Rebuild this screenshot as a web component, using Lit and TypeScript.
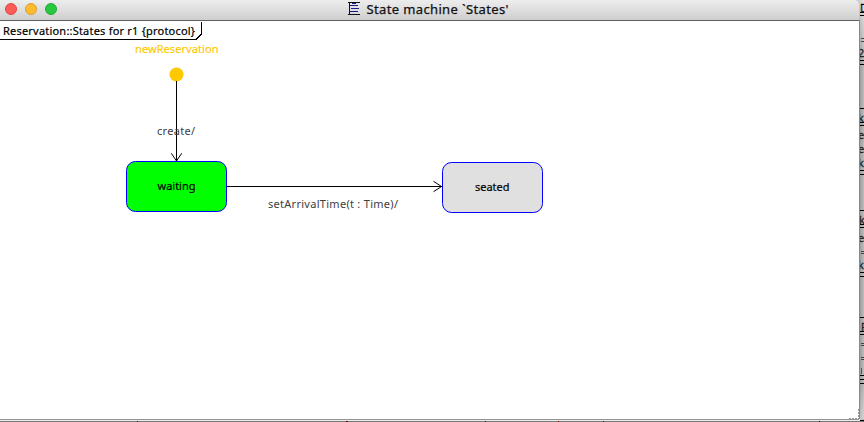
import { LitElement, html, svg, css } from "lit";
import { customElement } from "lit/decorators.js";

const RULES = [12, 15, 60, 64, 108, 122, 125, 170, 174, 210, 224, 227, 272, 276, 317, 331, 334, 375, 379, 383, 420];
const DASHES = [38, 41, 251, 253, 343, 345, 357, 359];
const GLYPHS: [string, number, number][] = [
  ["D", 860, 12], ["2", 858, 57], ["k", 858, 122], ["e", 858, 139], ["e", 858, 153], ["k", 858, 167],
  ["k", 859, 224], ["e", 858, 242], ["k", 858, 269], ["F", 861, 331],
];
const MARKS: [number, number, string][] = [
  [137, 1, "#300"], [346, 2, "#500"], [485, 1, "#300"], [558, 1, "#600"], [603, 1, "#300"], [819, 1, "#000"],
];

@customElement("title-bar")
class TitleBar extends LitElement {
  static styles = css`
    :host {
      display: flex; box-sizing: border-box; height: 21px; position: relative;
      align-items: flex-start; justify-content: center;
      background: linear-gradient(#ededed, #d0d0d0 19px);
      border-bottom: 1px solid #5f5f5f;
      border-top-right-radius: 5px;
    }
    .lights { position: absolute; left: 5px; top: 3px; display: flex; gap: 8px; }
    .light { box-sizing: border-box; width: 12px; height: 12px; border-radius: 50%; }
    .close { background: #fc5b57; border: 1px solid #df4744; }
    .min { background: #fdbc2e; border: 1px solid #de9f34; }
    .max { background: #27c840; border: 1px solid #24a833; }
    .caption { display: block; width: 163px; height: 20px; margin-right: 1px; }
    text { font-family: "Noto Sans", sans-serif; font-size: 13px; fill: #111; stroke: #111; stroke-width: 0.25px; }
  `;
  render() {
    return html`
      <div class="lights">
        <span class="light close"></span><span class="light min"></span><span class="light max"></span>
      </div>
      <svg class="caption" viewBox="0 0 163 20">
        <g shape-rendering="crispEdges">
          <path d="M0 2.5H12M0 14.5H12M1.5 2V15" stroke="#111" fill="none" />
          <path d="M4 3.5H8M2 5.5H10M3 8.5H11M2 11.5H10" stroke="#1a1a8c" fill="none" />
        </g>
        <text x="18.5" y="14" textLength="142">State machine \`States'</text>
      </svg>
    `;
  }
}

@customElement("state-diagram")
class StateDiagram extends LitElement {
  static styles = css`
    :host { display: block; height: 398px; background: #fff; }
    svg { display: block; width: 859px; height: 398px; }
    text { font-family: "Noto Sans", sans-serif; font-size: 11px; fill: #000; }
    .strong { stroke: #000; stroke-width: 0.2px; }
    .label { fill: #404040; }
    .create { fill: #ffc800; stroke: #ffc800; stroke-width: 0.15px; }
    .edge { stroke: #000; fill: none; shape-rendering: crispEdges; }
    .thin { stroke: #000; fill: none; }
    .state { stroke: #00f; }
    .active { fill: #0f0; }
    .idle { fill: #e0e0e0; }
  `;
  render() {
    return html`
      <svg viewBox="0 21 859 398">
        <path class="edge" d="M0 39.5H196L201.5 34V22" />
        <text class="strong" x="3" y="35" textLength="192">Reservation::States for r1 {protocol}</text>
        <text class="create" x="135" y="53" textLength="83.5">newReservation</text>
        <circle cx="176.5" cy="74.5" r="7" fill="#ffc800" />
        <path class="edge" d="M176.5 81V161" />
        <path class="thin" d="M171.3 153.3L176.5 161L181.7 153.3" />
        <text class="label" x="157" y="135" textLength="38">create/</text>
        <rect class="state active" x="126.5" y="161.5" width="100" height="50" rx="9" />
        <text class="strong" x="157.5" y="190" textLength="38">waiting</text>
        <path class="edge" d="M227 186.5H442" />
        <path class="thin" d="M433.5 181.3L441.5 186.5L433.5 191.7" />
        <text class="label" x="268" y="208" textLength="130">setArrivalTime(t : Time)/</text>
        <rect class="state idle" x="442.5" y="162.5" width="100" height="50" rx="9" />
        <text class="strong" x="475" y="191" textLength="34.5">seated</text>
        <path d="M858.5 409V419M849 418.5H859" stroke="#999" stroke-dasharray="2 1" fill="none" />
      </svg>
    `;
  }
}

@customElement("app-root")
class AppRoot extends LitElement {
  static styles = css`
    :host { display: grid; grid-template-columns: 859px 5px; grid-template-rows: 419px 3px; width: 864px; height: 422px; overflow: hidden; background: #fff; }
    .window { display: flex; flex-direction: column; background: #d0d0d0; }
    .behind { display: block; width: 5px; height: 419px; }
    .bottom { display: block; grid-column: 1 / 3; width: 864px; height: 3px; }
    text { font-family: "Noto Sans", sans-serif; font-size: 11px; fill: #222; stroke: #222; stroke-width: 0.3px; }
  `;
  render() {
    return html`
      <div class="window">
        <title-bar></title-bar>
        <state-diagram></state-diagram>
      </div>
      <svg class="behind" viewBox="859 0 5 419">
        <defs>
          <linearGradient id="shade"><stop stop-color="#969696" /><stop offset="1" stop-color="#bdbdbd" /></linearGradient>
          <linearGradient id="top" x2="0" y2="1"><stop stop-color="#fff" stop-opacity=".55" /><stop offset="1" stop-color="#fff" stop-opacity="0" /></linearGradient>
          <linearGradient id="foot" x2="0" y2="1"><stop stop-color="#fff" stop-opacity="0" /><stop offset="1" stop-color="#fff" stop-opacity=".35" /></linearGradient>
        </defs>
        <rect x="859" width="5" height="419" fill="url(#shade)" />
        <rect x="859" width="5" height="60" fill="url(#top)" />
        <rect x="859" y="385" width="5" height="34" fill="url(#foot)" />
        ${GLYPHS.map(([t, x, y]) => svg`<text x=${x} y=${y}>${t}</text>`)}
        ${RULES.map((y) => svg`<rect x="860" y=${y} width="4" height="1" fill="#000" />`)}
        ${DASHES.map((y) => svg`<rect x="861" y=${y} width="3" height="1" fill="#444" />`)}
        <rect x="861" y="4" width="3" height="1" fill="#000" />
        <rect x="861" y="368" width="1" height="6" fill="#555" />
        <rect x="859" y="20" width="1" height="399" fill="#888" />
      </svg>
      <svg class="bottom" viewBox="0 419 864 3" shape-rendering="crispEdges">
        <rect y="419" width="859" height="1" fill="#929292" />
        <rect y="420" width="860" height="1" fill="#ececec" />
        <rect y="421" width="864" height="1" fill="#777" />
        <rect x="860" y="419" width="4" height="1" fill="#bbb" />
        <rect x="860" y="420" width="4" height="1" fill="#000" />
        ${MARKS.map(([x, w, c]) => svg`<rect x=${x} y="421" width=${w} height="1" fill=${c} />`)}
      </svg>
    `;
  }
}
